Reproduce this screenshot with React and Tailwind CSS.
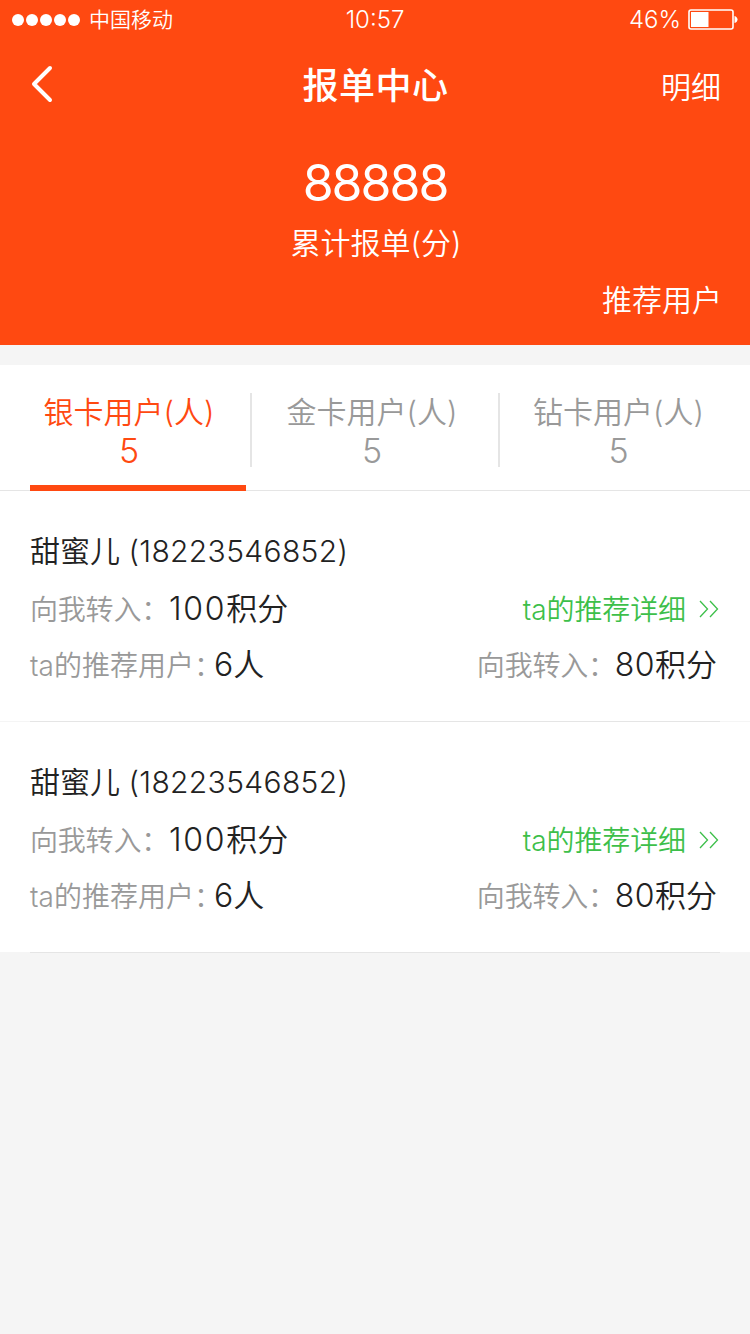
import React, { useState } from 'react';

const tabs = [
    { id: 'silver', label: '银卡用户(人)', count: 5, box: 'w-[250px] pl-[8px]' },
    { id: 'gold', label: '金卡用户(人)', count: 5, box: 'w-[248px] pr-[4px]' },
    { id: 'diamond', label: '钻卡用户(人)', count: 5, box: 'w-[252px] pr-[11px]' },
];

const users = [
    { id: 1, name: '甜蜜儿', phone: '18223546852', points: 100, referrals: 6, referralPoints: 80 },
    { id: 2, name: '甜蜜儿', phone: '18223546852', points: 100, referrals: 6, referralPoints: 80 },
];

const StatusBar = () => (
    <div className="h-10 pl-3 pr-[12px] grid grid-cols-3 items-center text-[21px] leading-10">
        <div className="flex items-center">
            <div className="flex gap-[2px] mr-[9px] mb-px">
                {[0, 1, 2, 3, 4].map((n) => (
                    <span key={n} className="w-3 h-3 rounded-full bg-white" />
                ))}
            </div>
            <span className="h-10">中国移动</span>
        </div>
        <span className="h-10 text-center text-[24px]">10:57</span>
        <div className="flex items-center justify-end">
            <span className="h-10 text-[24px] mr-[7px]">46%</span>
            <svg className="mb-px" width="50" height="22" viewBox="0 0 50 22" fill="none">
                <rect x="1" y="1" width="44" height="19" rx="2" stroke="white" strokeWidth="1.6" />
                <rect x="3" y="3" width="17.5" height="15" fill="white" />
                <path d="M46.5 7C50.5 8 50.5 13 46.5 14Z" fill="white" />
            </svg>
        </div>
    </div>
);

const UserCard = ({ user }) => (
    <li className="h-[231px] bg-white border-b border-[#f5f5f5]">
        <div className="mx-[30px] h-[231px] border-b border-[#e5e5e5] pt-[38px]">
            <p className="h-11 leading-[44px] text-[30px] text-[#222]">
                {user.name} <span className="tracking-[0.35px]">({user.phone})</span>
            </p>
            <div className="h-[57px] mt-[7px] flex items-center justify-between leading-[44px]">
                <div className="h-11 flex whitespace-nowrap">
                    <span className="w-[139px] mt-px text-[28px] tracking-[-0.2px] text-[#999]">向我转入：</span>
                    <span className="text-[31px] text-[#222]"><span className="text-[32px] tracking-[1.7px]">{user.points}</span>积分</span>
                </div>
                <button className="h-11 flex items-center pr-px text-[28px] text-[#3dbf4a]">
                    <span className="h-11 mr-[13px] mt-[2px] tracking-[-0.1px]">ta的推荐详细</span>
                    <svg width="20" height="18" viewBox="0 0 20 18" fill="none" stroke="currentColor" strokeWidth="1.3">
                        <path d="M1 1L8.5 9L1 17M11 1L18.5 9L11 17" />
                    </svg>
                </button>
            </div>
            <div className="h-[55px] flex items-center justify-between leading-[44px]">
                <div className="h-11 flex whitespace-nowrap">
                    <span className="w-[184px] mt-px text-[28px] text-[#999] [font-feature-settings:'halt']">ta的推荐用户：</span>
                    <span className="text-[31px] text-[#222]"><span className="text-[32px]">{user.referrals}</span>人</span>
                </div>
                <div className="h-11 flex whitespace-nowrap pr-[3px]">
                    <span className="w-[138px] mt-px text-[28px] tracking-[-0.2px] text-[#999]">向我转入：</span>
                    <span className="text-[31px] text-[#222]"><span className="text-[32px] tracking-[0.4px]">{user.referralPoints}</span>积分</span>
                </div>
            </div>
        </div>
    </li>
);

const App = () => {
    const [activeTab, setActiveTab] = useState('silver');

    return (
        <div className="w-[750px] h-[1334px] bg-[#f5f5f5] font-[350] font-['Inter','Noto_Sans_CJK_SC',sans-serif]">
            <header className="h-[345px] bg-[#ff4911] text-white">
                <StatusBar />
                <nav className="h-[88px] pl-[30px] pr-[29px] grid grid-cols-3 items-center">
                    <button>
                        <svg width="24" height="38" viewBox="0 0 24 38" fill="none" stroke="currentColor" strokeWidth="4" strokeLinecap="round" strokeLinejoin="round">
                            <path d="M20 3L4 19L20 35" />
                        </svg>
                    </button>
                    <h1 className="h-12 mt-[4px] leading-[48px] text-[36px] font-medium text-center tracking-[0.5px]">报单中心</h1>
                    <button className="h-11 mt-[6px] leading-[44px] text-[30px] text-right">明细</button>
                </nav>
                <div className="h-[128px] pt-[25px] text-center">
                    <p className="h-[60px] leading-[60px] text-[50px] font-normal tracking-[-2px]">88888</p>
                    <p className="h-11 mt-[8px] pl-[2px] leading-[44px] text-[30px]">累计报单(分)</p>
                </div>
                <p className="h-11 leading-[44px] mt-[22px] pr-[28px] text-right text-[30px]">推荐用户</p>
            </header>

            <main className="mt-5">
                <div className="h-[126px] bg-white border-b border-[#e5e5e5] flex">
                    {tabs.map((tab, i) => (
                        <button
                            key={tab.id}
                            onClick={() => setActiveTab(tab.id)}
                            className={`relative h-[125px] pt-[25px] pb-[20px] text-center text-[30px] ${tab.box} ${activeTab === tab.id ? 'text-[#ff4911]' : 'text-[#999]'}`}
                        >
                            <span className="block h-[40px] leading-[44px]">{tab.label}</span>
                            <span className="block h-[40px] leading-[42px] text-[34px]">{tab.count}</span>
                            {i < tabs.length - 1 && (
                                <span className="absolute -right-[2px] top-[28px] w-[2px] h-[74px] bg-[#e5e5e5]" />
                            )}
                            {activeTab === tab.id && (
                                <span className="absolute left-[30px] -bottom-px w-[216px] h-[6px] bg-[#ff4911]" />
                            )}
                        </button>
                    ))}
                </div>
                <ul>
                    {users.map((user) => (
                        <UserCard key={user.id} user={user} />
                    ))}
                </ul>
            </main>
        </div>
    );
};

export default App;
